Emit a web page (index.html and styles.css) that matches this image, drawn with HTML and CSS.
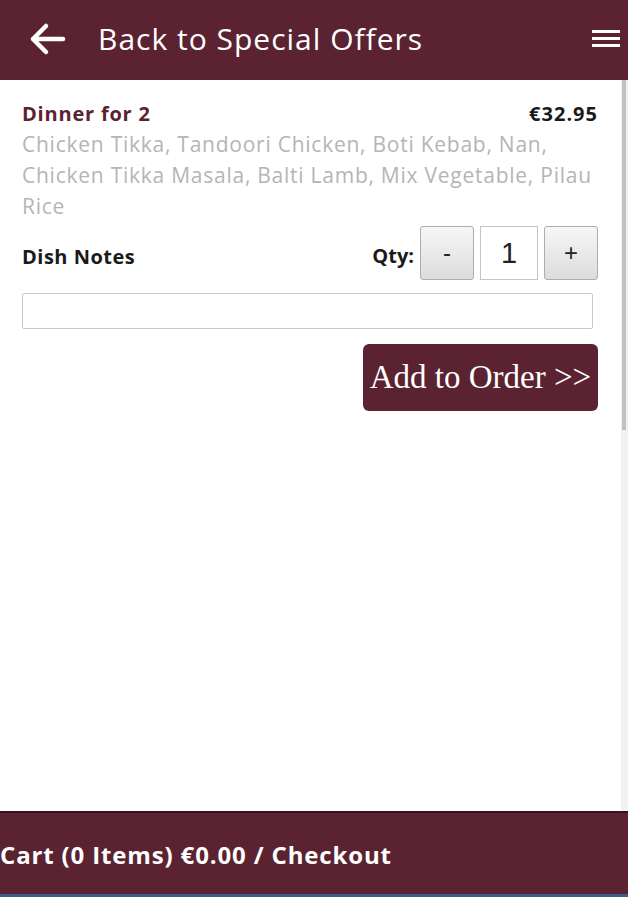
FILE: index.html
```html
<!DOCTYPE html>
<html lang="en">
<head>
    <meta charset="UTF-8">
    <meta name="viewport" content="width=device-width, initial-scale=1.0">
    <title>Dinner for 2</title>
    <link rel="stylesheet" href="styles.css">
</head>
<body>
    <!-- Barre du haut -->
    <div class="top-bar">
        <a class="back-link" href="#offers">
            <svg class="back-icon" width="38" height="34" viewBox="0 0 38 34">
                <path d="M35 17H5M18 4L5 17l13 13" fill="none" stroke="#fff" stroke-width="4.5" stroke-linecap="round" stroke-linejoin="round"/>
            </svg>
            <span>Back to Special Offers</span>
        </a>
        <div class="menu-btn">
            <span></span><span></span><span></span>
        </div>
    </div>

    <!-- Plat -->
    <div class="dish">
        <div class="dish-head">
            <div class="dish-name">Dinner for 2</div>
            <div class="dish-price">€32.95</div>
        </div>
        <p class="dish-desc">Chicken Tikka, Tandoori Chicken, Boti Kebab, Nan, Chicken Tikka Masala, Balti Lamb, Mix Vegetable, Pilau Rice</p>

        <div class="dish-row">
            <div class="notes-label">Dish Notes</div>
            <div class="qty">
                <span class="qty-label">Qty:</span>
                <button class="qty-btn">-</button>
                <input class="qty-input" type="text" value="1">
                <button class="qty-btn">+</button>
            </div>
        </div>

        <input class="notes-input" type="text">

        <div class="add-row">
            <button class="add-btn">Add to Order &gt;&gt;</button>
        </div>
    </div>

    <div class="scrollbar"><div class="thumb"></div></div>

    <!-- Panier -->
    <div class="cart-bar">Cart (0 Items) €0.00 / Checkout</div>
</body>
</html>
```

FILE: styles.css
```css
:root {
    --bordeaux: #5b2331;
    --blanc: #FFFFFF;
    --noir: #1A1A1A;
}

body {
    font-family: "Open Sans", sans-serif;
    margin: 0;
    height: 900px;
    background: var(--blanc);
    color: var(--noir);
    overflow: hidden;
}

/* Barre du haut */
.top-bar {
    height: 80px;
    box-sizing: border-box;
    background: var(--bordeaux);
    display: flex;
    align-items: center;
    justify-content: space-between;
    padding: 0 8px 3px 28px;
}

.back-link {
    display: flex;
    align-items: center;
    gap: 32px;
    color: var(--blanc);
    text-decoration: none;
    font-size: 30px;
    letter-spacing: 1px;
}

.menu-btn {
    display: flex;
    flex-direction: column;
    gap: 4px;
    width: 28px;
}

.menu-btn span {
    height: 3px;
    background: var(--blanc);
}

/* Plat */
.dish {
    padding: 20px 30px 0 22px;
}

.dish-head {
    display: flex;
    justify-content: space-between;
    font-weight: bold;
    font-size: 20px;
    letter-spacing: 0.8px;
}

.dish-name {
    color: var(--bordeaux);
}

.dish-price {
    letter-spacing: 1px;
}

.dish-desc {
    margin: 2px 0 0;
    color: #b5b5b5;
    font-size: 21px;
    letter-spacing: 0.75px;
    line-height: 31px;
}

.dish-row {
    display: flex;
    justify-content: space-between;
    align-items: center;
    margin-top: 4px;
}

.notes-label {
    font-weight: bold;
    font-size: 20px;
    letter-spacing: 0.5px;
    padding-top: 6px;
}

.qty {
    display: flex;
    align-items: center;
    gap: 6px;
}

.qty-label {
    font-weight: bold;
    font-size: 20px;
    padding-top: 4px;
}

.qty-btn {
    width: 54px;
    height: 54px;
    border: 1px solid #adadad;
    border-radius: 3px;
    background: linear-gradient(#f6f6f6, #dcdcdc);
    font-family: "Liberation Sans", sans-serif;
    font-size: 24px;
    color: #222;
    padding: 0;
}

.qty-input {
    width: 58px;
    height: 54px;
    box-sizing: border-box;
    border: 1px solid #c4c4c4;
    text-align: center;
    font-family: "Liberation Sans", sans-serif;
    font-size: 29px;
    color: #222;
    padding: 0;
}

.notes-input {
    display: block;
    width: 571px;
    height: 36px;
    box-sizing: border-box;
    margin-top: 13px;
    border: 1px solid #c8c8c8;
    border-radius: 2px;
}

.add-row {
    display: flex;
    justify-content: flex-end;
    margin-top: 15px;
}

.add-btn {
    background: var(--bordeaux);
    color: var(--blanc);
    border: none;
    border-radius: 6px;
    width: 235px;
    height: 67px;
    font-family: "Liberation Serif", serif;
    font-size: 33px;
    padding: 0;
}

/* Barre de défilement */
.scrollbar {
    position: absolute;
    top: 80px;
    right: 0;
    width: 7px;
    height: 732px;
    background: #f1f1f1;
}

.thumb {
    margin-left: 1px;
    width: 4px;
    height: 350px;
    background: #c1c1c1;
}

/* Panier */
.cart-bar {
    position: absolute;
    left: 0;
    right: 0;
    top: 811px;
    height: 86px;
    box-sizing: border-box;
    border-top: 2px solid #3d1019;
    border-bottom: 3px solid #3e5a86;
    background: var(--bordeaux);
    color: var(--blanc);
    font-weight: bold;
    font-size: 24px;
    letter-spacing: 0.85px;
    display: flex;
    align-items: center;
    padding-top: 2px;
}
```
